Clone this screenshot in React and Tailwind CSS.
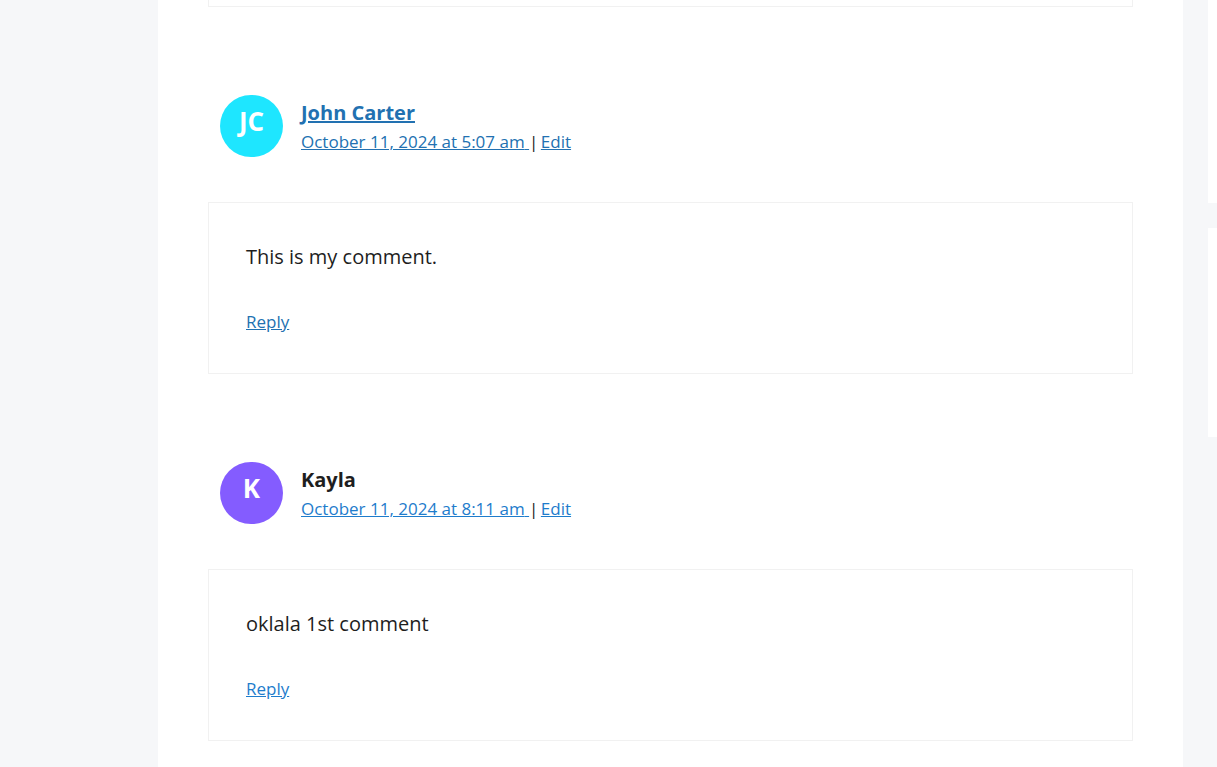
const comments = [
  {
    initials: "JC",
    color: "bg-[#1ee6ff]",
    name: "John Carter",
    nameLink: true,
    date: "October 11, 2024 at 5:07 am",
    linkColor: "text-[#2271b1]",
    text: "This is my comment.",
  },
  {
    initials: "K",
    color: "bg-[#845cff]",
    name: "Kayla",
    nameLink: false,
    date: "October 11, 2024 at 8:11 am",
    linkColor: "text-[#1e7ccc]",
    text: "oklala 1st comment",
  },
];

const Comment = ({ comment }) => {
  return (
    <div className="mt-[88px]">
      <div className="flex items-center pl-3 h-[62px]">
        <div
          className={`w-[63px] h-[62px] rounded-full flex items-center justify-center text-white font-bold text-[26px] pb-[10px] ${comment.color}`}
        >
          {comment.initials}
        </div>
        <div className="ml-[18px]">
          <div className="text-[20px] leading-[30px] font-bold">
            {comment.nameLink ? (
              <a href="#" className={`underline ${comment.linkColor}`}>
                {comment.name}
              </a>
            ) : (
              <span className="text-[#1e1e1e]">{comment.name}</span>
            )}
          </div>
          <div className="text-[17px] leading-[27px]">
            <a href="#" className={`underline ${comment.linkColor}`}>
              {comment.date}{" "}
            </a>
            <span className="text-[#1e1e1e] mr-[-2px]">| </span>
            <a href="#" className={`underline ${comment.linkColor}`}>
              Edit
            </a>
          </div>
        </div>
      </div>
      <div className="mt-[45px] h-[172px] border border-[#f1f1f1] pl-[37px] pt-[39px]">
        <p className="text-[20px] leading-[30px] text-[#1e1e1e]">{comment.text}</p>
        <a
          href="#"
          className={`block mt-[36px] text-[17px] leading-[27px] underline ${comment.linkColor}`}
        >
          Reply
        </a>
      </div>
    </div>
  );
};

const App = () => {
  return (
    <div
      className="flex h-screen overflow-hidden bg-[#f6f7f9]"
      style={{ fontFamily: '"Open Sans", sans-serif' }}
    >
      <div className="w-[158px] shrink-0" />
      <main className="w-[1025px] shrink-0 bg-white px-[50px]">
        <div className="h-[7px] border border-t-0 border-[#f1f1f1]" />
        {comments.map((comment) => (
          <Comment key={comment.name} comment={comment} />
        ))}
      </main>
      <div className="w-[25px] shrink-0" />
      <aside className="flex-1 flex flex-col gap-[25px]">
        <div className="h-[203px] bg-white" />
        <div className="h-[209px] bg-white" />
      </aside>
    </div>
  );
};

export default App;
